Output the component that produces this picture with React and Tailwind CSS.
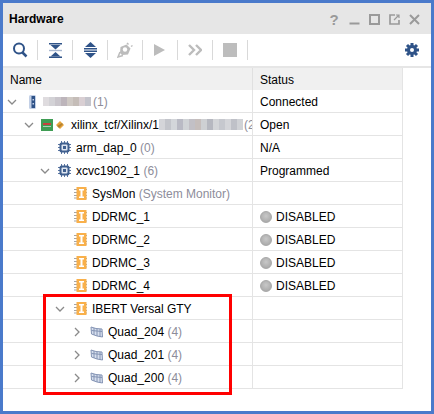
const NAVY = "#2f5388";
const GRAY = "#bcbcbc";

function Chevron({ open }) {
  return (
    <svg width="10" height="10" viewBox="0 0 10 10" fill="none" stroke="#8a8a8a" strokeWidth="1.3" className="shrink-0">
      {open ? <path d="M1 3l4 4 4-4" /> : <path d="M3 1l4 4-4 4" />}
    </svg>
  );
}

function Chip() {
  return (
    <svg width="13" height="13" viewBox="0 0 13 13" className="shrink-0">
      <path d="M3.500 0v13M6.500 0v13M9.500 0v13M0 3.500h13M0 6.500h13M0 9.500h13" stroke="#5b76a3" strokeWidth="1" />
      <rect x="1.500" y="1.500" width="10" height="10" rx="2" fill="#40608f" />
      <rect x="3.500" y="3.500" width="6" height="6" rx="1" fill="#dfe6f1" />
      <rect x="5" y="5" width="3" height="3" fill="#40608f" />
    </svg>
  );
}

function Core() {
  return (
    <svg width="13" height="13" viewBox="0 0 13 13" className="shrink-0">
      <path d="M0 2.500h13M0 5.500h13M0 8.500h13M0 11h13" stroke="#a5a5a5" strokeWidth="1" />
      <rect x="2.500" y="0" width="10" height="13" fill="#f9b04a" />
      <path d="M5 2h5v1.500H8.500v6H10V11H5V9.500h1.500v-6H5z" fill="#fff" />
    </svg>
  );
}

function Quad() {
  return (
    <svg width="13" height="12" viewBox="0 0 13 12" className="shrink-0">
      <path d="M1 1l5 1.500 6 0.500 0.500 8-5.500-1-5.500-2z" fill="#d7dfee" stroke="#8494b4" strokeWidth="1" />
      <path d="M4 2v7M7 3v7M10 3v8M1.500 4.500l10.500 1" stroke="#8494b4" strokeWidth="1" />
    </svg>
  );
}

function Board() {
  return (
    <svg width="7" height="14" viewBox="0 0 7 14" className="shrink-0">
      <rect x="0" y="0" width="7" height="14" rx="1.500" fill="#c3d0e6" />
      <rect x="2.500" y="1" width="3.500" height="12" fill="#2f5388" />
      <rect x="3.500" y="4" width="1.500" height="1.500" fill="#c3d0e6" />
      <rect x="3.500" y="8" width="1.500" height="1.500" fill="#c3d0e6" />
    </svg>
  );
}

function Cable() {
  return (
    <div className="flex items-center gap-[3px] shrink-0">
      <svg width="12" height="12" viewBox="0 0 12 12">
        <rect width="12" height="12" fill="#3f9d54" />
        <rect x="2" y="4" width="8" height="2" fill="#c9413c" />
        <rect x="2" y="7" width="8" height="1" fill="#a9d3b2" />
      </svg>
      <svg width="8" height="8" viewBox="0 0 8 8">
        <path d="M4 0l4 4-4 4-4-4z" fill="#e9a43b" />
        <path d="M1 5l2 2 4-4-1-1z" fill="#8d6a2c" opacity="0.6" />
      </svg>
    </div>
  );
}

function Mosaic({ colors, cell, height }) {
  return (
    <svg width={colors.length * cell} height={height} className="shrink-0 blur-[0.5px]">
      {colors.map((c, i) => (
        <rect key={i} x={i * cell} y="0" width={cell} height={height} fill={c} />
      ))}
    </svg>
  );
}

function Led() {
  return (
    <span className="w-[12px] h-[12px] rounded-full shrink-0 bg-[radial-gradient(circle_at_50%_40%,#c8c8c8,#a2a2a2)] border border-[#a8a8a8]" />
  );
}

function Tool({ children }) {
  return <div className="w-[34px] flex items-center justify-center">{children}</div>;
}

function Sep() {
  return <div className="w-px h-[20px] bg-[#d9d9d9] shrink-0" />;
}

function Row({ indent, box, chevron, children, status, disabled }) {
  return (
    <div className="flex h-[23px] border-b border-[#e4e4e4]">
      <div className={`w-[250px] shrink-0 flex items-center overflow-hidden whitespace-nowrap border-r border-[#e4e4e4] pt-px ${indent}`}>
        <div className={`shrink-0 flex items-center ${box}`}>
          {chevron !== undefined && <Chevron open={chevron} />}
        </div>
        {children}
      </div>
      <div className="flex-1 flex items-center pl-[7px] pt-px gap-[4px]">
        {disabled && <Led />}
        {status}
      </div>
    </div>
  );
}

const Dim = ({ children }) => <span className="text-[#8d8d9a]">{children}</span>;

export default function App() {
  return (
    <div className="w-[434px] h-[414px] border-[3px] border-[#4a7acb] bg-white flex flex-col text-[12px] text-black font-['Liberation_Sans',Arial,sans-serif]">
      <div className="h-[31px] shrink-0 bg-[#e6e6e6] flex items-center pl-[6px] pr-[11px] pt-px">
        <span className="font-bold flex-1">Hardware</span>
        <div className="flex items-center gap-[9px] text-[#9a9a9a]">
          <span className="w-[12px] text-center text-[15px] font-bold leading-none">?</span>
          <svg width="11" height="11" viewBox="0 0 11 11"><rect x="0.500" y="8.500" width="10" height="2" fill="#9a9a9a" /></svg>
          <svg width="11" height="11" viewBox="0 0 11 11" fill="none" stroke="#9a9a9a"><rect x="1" y="1" width="9" height="9" strokeWidth="2" /></svg>
          <svg width="11" height="11" viewBox="0 0 11 11" fill="none" stroke="#9a9a9a" strokeWidth="1.700"><path d="M6 1H1v9h9V6" /><path d="M5 6l5-5M7 1h3v3" strokeWidth="1.200" /></svg>
          <svg width="11" height="11" viewBox="0 0 11 11" fill="none" stroke="#9a9a9a" strokeWidth="2"><path d="M1 1l9 9M10 1l-9 9" /></svg>
        </div>
      </div>

      <div className="h-[32px] shrink-0 flex items-center">
        <Tool>
          <svg width="16" height="16" viewBox="0 0 16 16" fill="none" stroke={NAVY} strokeWidth="2"><circle cx="7" cy="6.500" r="5" /><path d="M10.500 10.500l4 4" strokeWidth="2.500" /></svg>
        </Tool>
        <Sep />
        <Tool>
          <svg width="13" height="15" viewBox="0 0 13 15" fill={NAVY}><rect y="0" width="13" height="1.500" /><path d="M1.500 2h10l-5 4.500z" /><rect y="6.800" width="13" height="1.400" fill="#a9b8d0" /><path d="M6.500 9l5 4.500h-10z" /><rect y="13.500" width="13" height="1.500" /></svg>
        </Tool>
        <Sep />
        <Tool>
          <svg width="13" height="16" viewBox="0 0 13 16" fill={NAVY}><path d="M6.500 0l5.500 5H1z" /><rect y="6" width="13" height="1.500" /><rect y="8.500" width="13" height="1.500" /><path d="M6.500 16L1 11h11z" /></svg>
        </Tool>
        <Sep />
        <Tool>
          <svg width="16" height="16" viewBox="0 0 16 16" fill={GRAY}><path d="M3.500 5l6-2.500 4 4L11 12.500l-6 .5-2-2z" /><path d="M10 1l1.500 1.500M14 4.500l1.500-1M3 10L1 15l5-1.500" stroke={GRAY} strokeWidth="1.500" fill="none" /><circle cx="8" cy="7.500" r="2.200" fill="#fff" /></svg>
        </Tool>
        <Sep />
        <Tool>
          <svg width="12" height="14" viewBox="0 0 12 14" fill={GRAY}><path d="M0 1v12l11-6z" /></svg>
        </Tool>
        <Sep />
        <Tool>
          <svg width="14" height="12" viewBox="0 0 14 12" fill="none" stroke={GRAY} strokeWidth="2.400"><path d="M1 1l5 5-5 5M8 1l5 5-5 5" /></svg>
        </Tool>
        <Sep />
        <Tool>
          <div className="w-[14px] h-[14px] bg-[#bdbdbd]" />
        </Tool>
        <Sep />
        <div className="flex-1 flex justify-end pr-[12px]">
          <svg width="14" height="14" viewBox="0 0 14 14">
            <path d="M7 0v14M0 7h14M2 2l10 10M12 2L2 12" stroke={NAVY} strokeWidth="3" />
            <circle cx="7" cy="7" r="5" fill={NAVY} />
            <circle cx="7" cy="7" r="2" fill="#fff" />
          </svg>
        </div>
      </div>

      <div className="h-[2px] shrink-0 bg-[#e6e6e6]" />

      <div className="w-[400px] border-r border-[#e4e4e4]">
        <div className="flex h-[22px] bg-[#f0f0f0]">
          <div className="w-[250px] shrink-0 flex items-center pl-[7px] pt-px border-r border-[#e0e0e0]">Name</div>
          <div className="flex-1 flex items-center pl-[7px] pt-px">Status</div>
        </div>

        <Row indent="pl-[4px]" box="w-[18px]" chevron={true} status="Connected">
          <div className="ml-[4px] flex items-center">
            <Board />
          </div>
          <div className="ml-[7px] flex items-center">
            <Mosaic height={9} cell={6} colors={["#dfdcdf", "#d3d2d6", "#c9c5cb", "#bdb5bb", "#cfc9c4", "#c5bdb8", "#d9cfd3", "#c4c4cc"]} />
            <span className="ml-[2px]"><Dim>(1)</Dim></span>
          </div>
        </Row>

        <Row indent="pl-[21px]" box="w-[17px]" chevron={true} status="Open">
          <Cable />
          <span className="ml-[7px]">xilinx_tcf/Xilinx/1</span>
          <Mosaic height={11} cell={6} colors={["#d4d5d9", "#c3c5cb", "#d3d6da", "#b9bac4", "#d0d3d6", "#c2c0c6", "#c6bebc", "#ced0d3", "#b6b8c0", "#d3d5d8", "#c6c8ce", "#d4d5d9", "#bfc1c8", "#d0d2d6"]} />
          <span className="ml-[1px]"><Dim>(2</Dim></span>
        </Row>

        <Row indent="pl-[37px]" box="w-[18px]" status="N/A">
          <Chip />
          <span className="ml-[5px]">arm_dap_0 <Dim>(0)</Dim></span>
        </Row>

        <Row indent="pl-[37px]" box="w-[18px]" chevron={true} status="Programmed">
          <Chip />
          <span className="ml-[5px]">xcvc1902_1 <Dim>(6)</Dim></span>
        </Row>

        <Row indent="pl-[52px]" box="w-[19px]">
          <Core />
          <span className="ml-[5px]">SysMon <Dim>(System Monitor)</Dim></span>
        </Row>

        {["DDRMC_1", "DDRMC_2", "DDRMC_3", "DDRMC_4"].map((n) => (
          <Row key={n} indent="pl-[52px]" box="w-[19px]" status="DISABLED" disabled>
            <Core />
            <span className="ml-[5px]">{n}</span>
          </Row>
        ))}

        <Row indent="pl-[52px]" box="w-[19px]" chevron={true}>
          <Core />
          <span className="ml-[5px]">IBERT Versal GTY</span>
        </Row>

        {["Quad_204", "Quad_201", "Quad_200"].map((n) => (
          <Row key={n} indent="pl-[69px]" box="w-[18px]" chevron={false}>
            <Quad />
            <span className="ml-[5px]">{n} <Dim>(4)</Dim></span>
          </Row>
        ))}
      </div>

      <div className="absolute left-[43px] top-[294px] w-[189px] h-[101px] border-[3px] border-[#ff0000]" />
    </div>
  );
}
